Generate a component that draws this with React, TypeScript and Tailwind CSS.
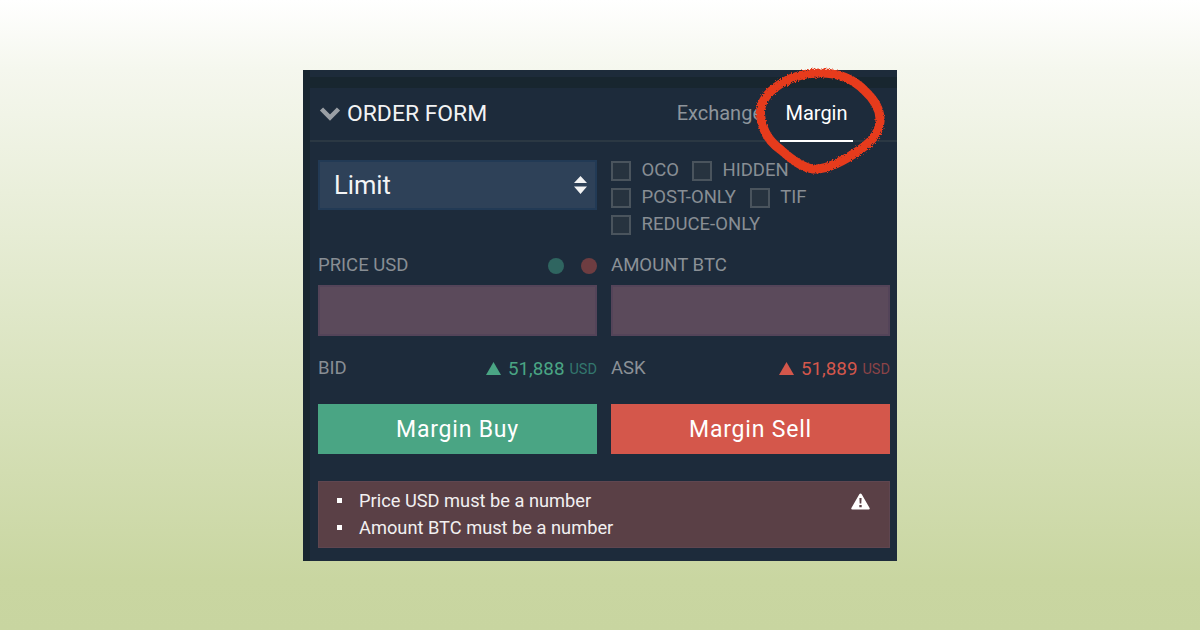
import React from "react";

function Check({ label }: { label: string }) {
  return (
    <div className="flex items-center gap-[10.5px] h-[27px]">
      <span className="w-[20px] h-[20px] border-2 border-[#4a545d] bg-[#27333f] box-border" />
      <span className="text-[18.5px] leading-[25px] text-[#888e94]">{label}</span>
    </div>
  );
}

function Tri({ color }: { color: string }) {
  return (
    <svg width="15" height="13" viewBox="0 0 15 13" className="mr-[7px] -mt-[2px]">
      <path d="M7.5 0 L15 13 L0 13 Z" fill={color} />
    </svg>
  );
}

export default function App() {
  return (
    <div
      className="relative w-[1200px] h-[630px] overflow-hidden pt-[70px] pl-[303px] bg-[linear-gradient(180deg,#ffffff_0%,#f5f7ee_11%,#dfe7c8_50%,#c9d6a1_92%,#c8d5a0_100%)]"
      style={{ fontFamily: "Roboto, sans-serif" }}
    >
      <div className="w-[594px] h-[491px] bg-[#18262f] flex">
        <div className="w-[7px] shrink-0" />
        <div className="flex-1 flex flex-col">
          <div className="h-[7px] bg-[#1d2b3a]" />
          <div className="h-[11px]" />
          <div className="flex-1 bg-[#1d2b3b] flex flex-col">
            <div className="h-[54px] border-b-2 border-[#2b3843] flex items-center justify-between pl-[9px] box-border">
              <div className="flex items-center gap-[6px] -mt-[2px]">
                <svg width="22" height="15" viewBox="0 0 22 15">
                  <path d="M2.5 3 L11 11.5 L19.5 3" fill="none" stroke="#9a9fa5" strokeWidth="4.5" />
                </svg>
                <span className="text-[22.9px] text-[#f2f3f4] leading-[27px]">ORDER FORM</span>
              </div>
              <div className="flex items-start h-full pr-[44px]">
                <span className="text-[20px] leading-[24px] text-[#8e959b] mt-[13px] mr-[17px]">Exchange</span>
                <span className="text-[20px] leading-[24px] text-white pt-[13px] px-[5px] w-[73px] h-[54px] border-b-2 border-white box-border text-center whitespace-nowrap">Margin</span>
              </div>
            </div>

            <div className="grid grid-cols-[279px_279px] gap-x-[14px] pl-[8px] pt-[18px]">
              <div className="h-[50px] bg-[#2e4158] border-2 border-[#223a55] flex items-center justify-between pl-[14px] pr-[8px]">
                <span className="text-[25.5px] text-[#f4f5f6]">Limit</span>
                <svg width="13" height="18" viewBox="0 0 13 18">
                  <path d="M6.5 0 L13 7 L0 7 Z M6.5 18 L13 10.5 L0 10.5 Z" fill="#f2f3f4" />
                </svg>
              </div>
              <div className="flex flex-col -mt-[3px]">
                <div className="flex gap-[13px]"><Check label="OCO" /><Check label="HIDDEN" /></div>
                <div className="flex gap-[14px]"><Check label="POST-ONLY" /><Check label="TIF" /></div>
                <Check label="REDUCE-ONLY" />
              </div>
            </div>

            <div className="grid grid-cols-[279px_279px] gap-x-[14px] pl-[8px] pt-[12px]">
              <div className="flex items-center justify-between h-[32px]">
                <span className="text-[18.5px] text-[#888e94]">PRICE USD</span>
                <div className="flex gap-[17px]">
                  <span className="w-[16px] h-[16px] rounded-full bg-[#2f6560]" />
                  <span className="w-[16px] h-[16px] rounded-full bg-[#6e3d41]" />
                </div>
              </div>
              <div className="flex items-center h-[32px]">
                <span className="text-[18.6px] text-[#8b9197]">AMOUNT BTC</span>
              </div>
              <div className="h-[51px] mt-[3px] bg-[#5b4a5b] border-2 border-[#544459]" />
              <div className="h-[51px] mt-[3px] bg-[#5b4a5b] border-2 border-[#544459]" />
              <div className="flex items-center justify-between h-[32px] mt-[17px]">
                <span className="text-[18.5px] text-[#888e94]">BID</span>
                <span className="flex items-center">
                  <Tri color="#4aa584" />
                  <span className="text-[18.8px] text-[#4aa584] mr-[5px]">51,888</span>
                  <span className="text-[14.5px] text-[#33776e] mt-[2px]">USD</span>
                </span>
              </div>
              <div className="flex items-center justify-between h-[32px] mt-[17px]">
                <span className="text-[18.5px] text-[#8b9197]">ASK</span>
                <span className="flex items-center">
                  <Tri color="#d4574b" />
                  <span className="text-[18.8px] text-[#d4574b] mr-[5px]">51,889</span>
                  <span className="text-[14.5px] text-[#8a4347] mt-[2px]">USD</span>
                </span>
              </div>
              <div className="h-[50px] mt-[19px] pt-[2px] bg-[#4aa584] flex items-center justify-center text-[23px] tracking-[0.8px] text-white">Margin Buy</div>
              <div className="h-[50px] mt-[19px] pt-[2px] bg-[#d4574b] flex items-center justify-center text-[23px] tracking-[0.8px] text-white">Margin Sell</div>
            </div>

            <div className="ml-[8px] w-[572px] h-[67px] mt-[27px] bg-[#5a4046] border border-[#5f4650] flex justify-between pl-[18px] pr-[19px] box-border">
              <ul className="text-[18.25px] leading-[27px] text-[#f2f0f1] pt-[5px]">
                <li className="flex items-center gap-[17px]"><span className="w-[5px] h-[5px] bg-white" />Price USD must be a number</li>
                <li className="flex items-center gap-[17px]"><span className="w-[5px] h-[5px] bg-white" />Amount BTC must be a number</li>
              </ul>
              <svg width="19" height="17" viewBox="0 0 19 17" className="mt-[11px]">
                <path fillRule="evenodd" d="M9.5 0.5 Q10.2 0.5 10.7 1.3 L18.6 15 Q19.2 16.5 17.7 16.5 L1.3 16.5 Q-0.2 16.5 0.4 15 L8.3 1.3 Q8.8 0.5 9.5 0.5 Z M8.4 5 L8.7 10.5 L10.3 10.5 L10.6 5 Z M8.3 12 L8.3 14.2 L10.7 14.2 L10.7 12 Z" fill="#ffffff" />
              </svg>
            </div>
          </div>
        </div>
      </div>

      <svg className="absolute left-[745px] top-[58px]" width="150" height="125" viewBox="0 0 150 125">
        <defs>
          <filter id="rough" x="-10%" y="-10%" width="120%" height="120%">
            <feTurbulence type="fractalNoise" baseFrequency="0.8" numOctaves="2" seed="4" />
            <feDisplacementMap in="SourceGraphic" scale="4" />
          </filter>
        </defs>
        <path
          d="M135 64 C136 52 130 42 119 32 C108 21 94 15 76 15 C56 15 38 22 25 34 C17 42 14 50 16 60 C18 74 26 85 36 92 C46 101 56 109 68 111 C82 112 102 101 116 91 C126 84 135 74 135 62"
          fill="none"
          stroke="#e63a1e"
          strokeWidth="9"
          strokeLinecap="round"
          filter="url(#rough)"
        />
      </svg>
    </div>
  );
}
